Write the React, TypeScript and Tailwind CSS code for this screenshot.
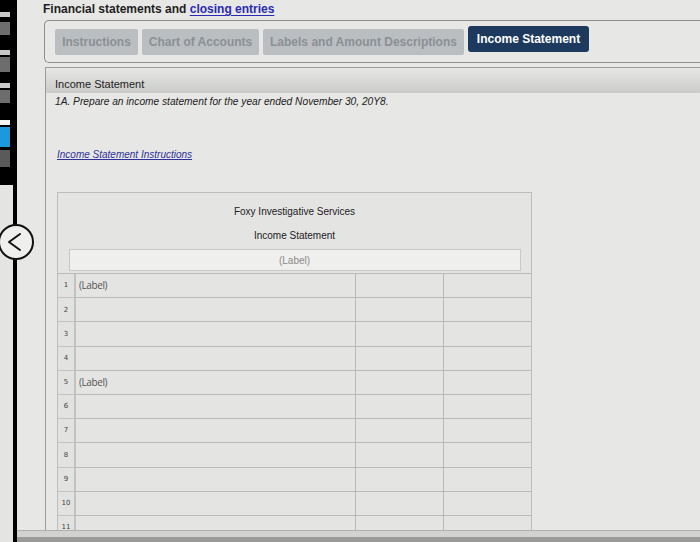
import React from "react";

const rows = Array.from({ length: 11 }, (_, i) => i + 1);
const labels: Record<number, string> = { 1: "(Label)", 5: "(Label)" };

export default function App() {
  return (
    <div className="relative flex h-[542px] w-[700px] overflow-hidden bg-[#e7e7e5] font-['Liberation_Sans',Arial,sans-serif] text-[#222]">
      {/* left bezel / sidebar edge */}
      <div className="flex w-[17px] shrink-0 flex-col">
        <div className="flex h-[185px] flex-col bg-black pr-[7px] pt-[12px]">
          <div className="h-[5px] bg-[#c9c9c9]" />
          <div className="mt-[5px] h-[13px] bg-[#6d6d6d]" />
          <div className="mt-[15px] h-[5px] bg-[#c9c9c9]" />
          <div className="mt-[2px] h-[15px] bg-[#6d6d6d]" />
          <div className="mt-[11px] h-[5px] bg-[#c9c9c9]" />
          <div className="mt-[2px] h-[13px] bg-[#6d6d6d]" />
          <div className="mt-[17px] h-[5px] bg-[#f2f2f2]" />
          <div className="mt-[2px] h-[20px] bg-[#1c98dc]" />
          <div className="mt-[3px] h-[17px] bg-[#5a5a5a]" />
        </div>
        <div className="flex-1 border-r-[4px] border-black bg-[#e4e4e2]" />
      </div>

      {/* collapse button */}
      <div className="absolute left-[-2px] top-[224px] flex h-[36px] w-[36px] items-center justify-center rounded-full border-[2px] border-[#111] bg-[#efefed]">
        <svg width="20" height="22" viewBox="0 0 20 22" className="ml-[-2px]">
          <path d="M15 3 L4 11 L15 19" fill="none" stroke="#111" strokeWidth="2" strokeLinecap="round" strokeLinejoin="round" />
        </svg>
      </div>

      {/* main page */}
      <div className="flex min-w-0 flex-1 flex-col">
        <div className="ml-[26px] mt-[1px] h-[16px] whitespace-nowrap text-[12px] font-bold leading-[16px] text-[#1e1e1e]">
          Financial statements and{" "}
          <span className="text-[#2a2ab4] underline underline-offset-2">closing entries</span>
        </div>

        {/* tab bar */}
        <div className="ml-[27px] mt-[3px] flex h-[43px] items-center gap-[4px] rounded-l-[5px] border border-r-0 border-[#8e8e8e] pl-[10px] pt-[1px]">
          <div className="flex h-[26px] w-[83px] items-center justify-center rounded-[2px] bg-[#babec1] text-[12px] font-bold text-[#8b9094]">
            Instructions
          </div>
          <div className="flex h-[26px] w-[117px] items-center justify-center rounded-[2px] bg-[#babec1] text-[12px] font-bold text-[#8b9094]">
            Chart of Accounts
          </div>
          <div className="flex h-[26px] w-[201px] items-center justify-center whitespace-nowrap rounded-[2px] bg-[#babec1] text-[12px] font-bold text-[#8b9094]">
            Labels and Amount Descriptions
          </div>
          <div className="mt-[-6px] flex h-[26px] w-[121px] items-center justify-center whitespace-nowrap rounded-[3px] bg-[#1d3a5e] text-[12px] font-bold text-white">
            Income Statement
          </div>
        </div>

        {/* content panel */}
        <div className="ml-[28px] mt-[4px] flex min-h-0 flex-1 flex-col overflow-hidden border-l border-t border-[#9a9a9a]">
          <div className="flex h-[25px] shrink-0 items-end bg-gradient-to-b from-[#e6e6e4] to-[#cbcbc9] pb-[2px] pl-[9px] text-[11px] leading-[14px] text-[#222]">
            Income Statement
          </div>
          <div className="ml-[9px] mt-[2px] text-[10.2px] italic leading-[14px] text-[#222]">
            1A. Prepare an income statement for the year ended November 30, 20Y8.
          </div>
          <div className="ml-[11px] mt-[39px] text-[10px] italic leading-[14px] text-[#30309a] underline">
            Income Statement Instructions
          </div>

          {/* statement table */}
          <div className="ml-[11px] mt-[30px] w-[475px] shrink-0 border border-b-0 border-[#bdbdbb] bg-[#e4e4e2]">
            <div className="flex flex-col items-center pb-[2px] pt-[11px]">
              <div className="text-[10px] leading-[16px] text-[#222]">Foxy Investigative Services</div>
              <div className="mt-[8px] text-[10px] leading-[16px] text-[#222]">Income Statement</div>
              <div className="mt-[5px] flex h-[22px] w-[452px] items-center justify-center border border-[#c8c8c6] bg-[#efefed] text-[10px] text-[#8a8a8a]">
                (Label)
              </div>
            </div>
            <div className="grid grid-cols-[18px_280px_88px_87px] border-t border-[#b9b9b7]">
              {rows.map((n) => (
                <React.Fragment key={n}>
                  <div className="flex h-[24.2px] items-center justify-center border-b border-r-2 border-[#c2c2c0] bg-[#e2e2e0] font-['DejaVu_Sans',sans-serif] text-[7px] text-[#444]">
                    {n}
                  </div>
                  <div className="flex h-[24.2px] items-center border-b border-r border-[#b9b9b7] pl-[3px] font-['Open_Sans',sans-serif] text-[10px] tracking-[-0.4px] text-[#555]">
                    {labels[n] ?? ""}
                  </div>
                  <div className="h-[24.2px] border-b border-r border-[#b9b9b7]" />
                  <div className="h-[24.2px] border-b border-[#b9b9b7]" />
                </React.Fragment>
              ))}
            </div>
          </div>
        </div>

        {/* bottom edge */}
        <div className="flex h-[12px] shrink-0 flex-col">
          <div className="h-[7px] border-t border-[#b0b0ae] bg-[#d2d2d0]" />
          <div className="flex-1 bg-[#9a9a98]" />
        </div>
      </div>
    </div>
  );
}
